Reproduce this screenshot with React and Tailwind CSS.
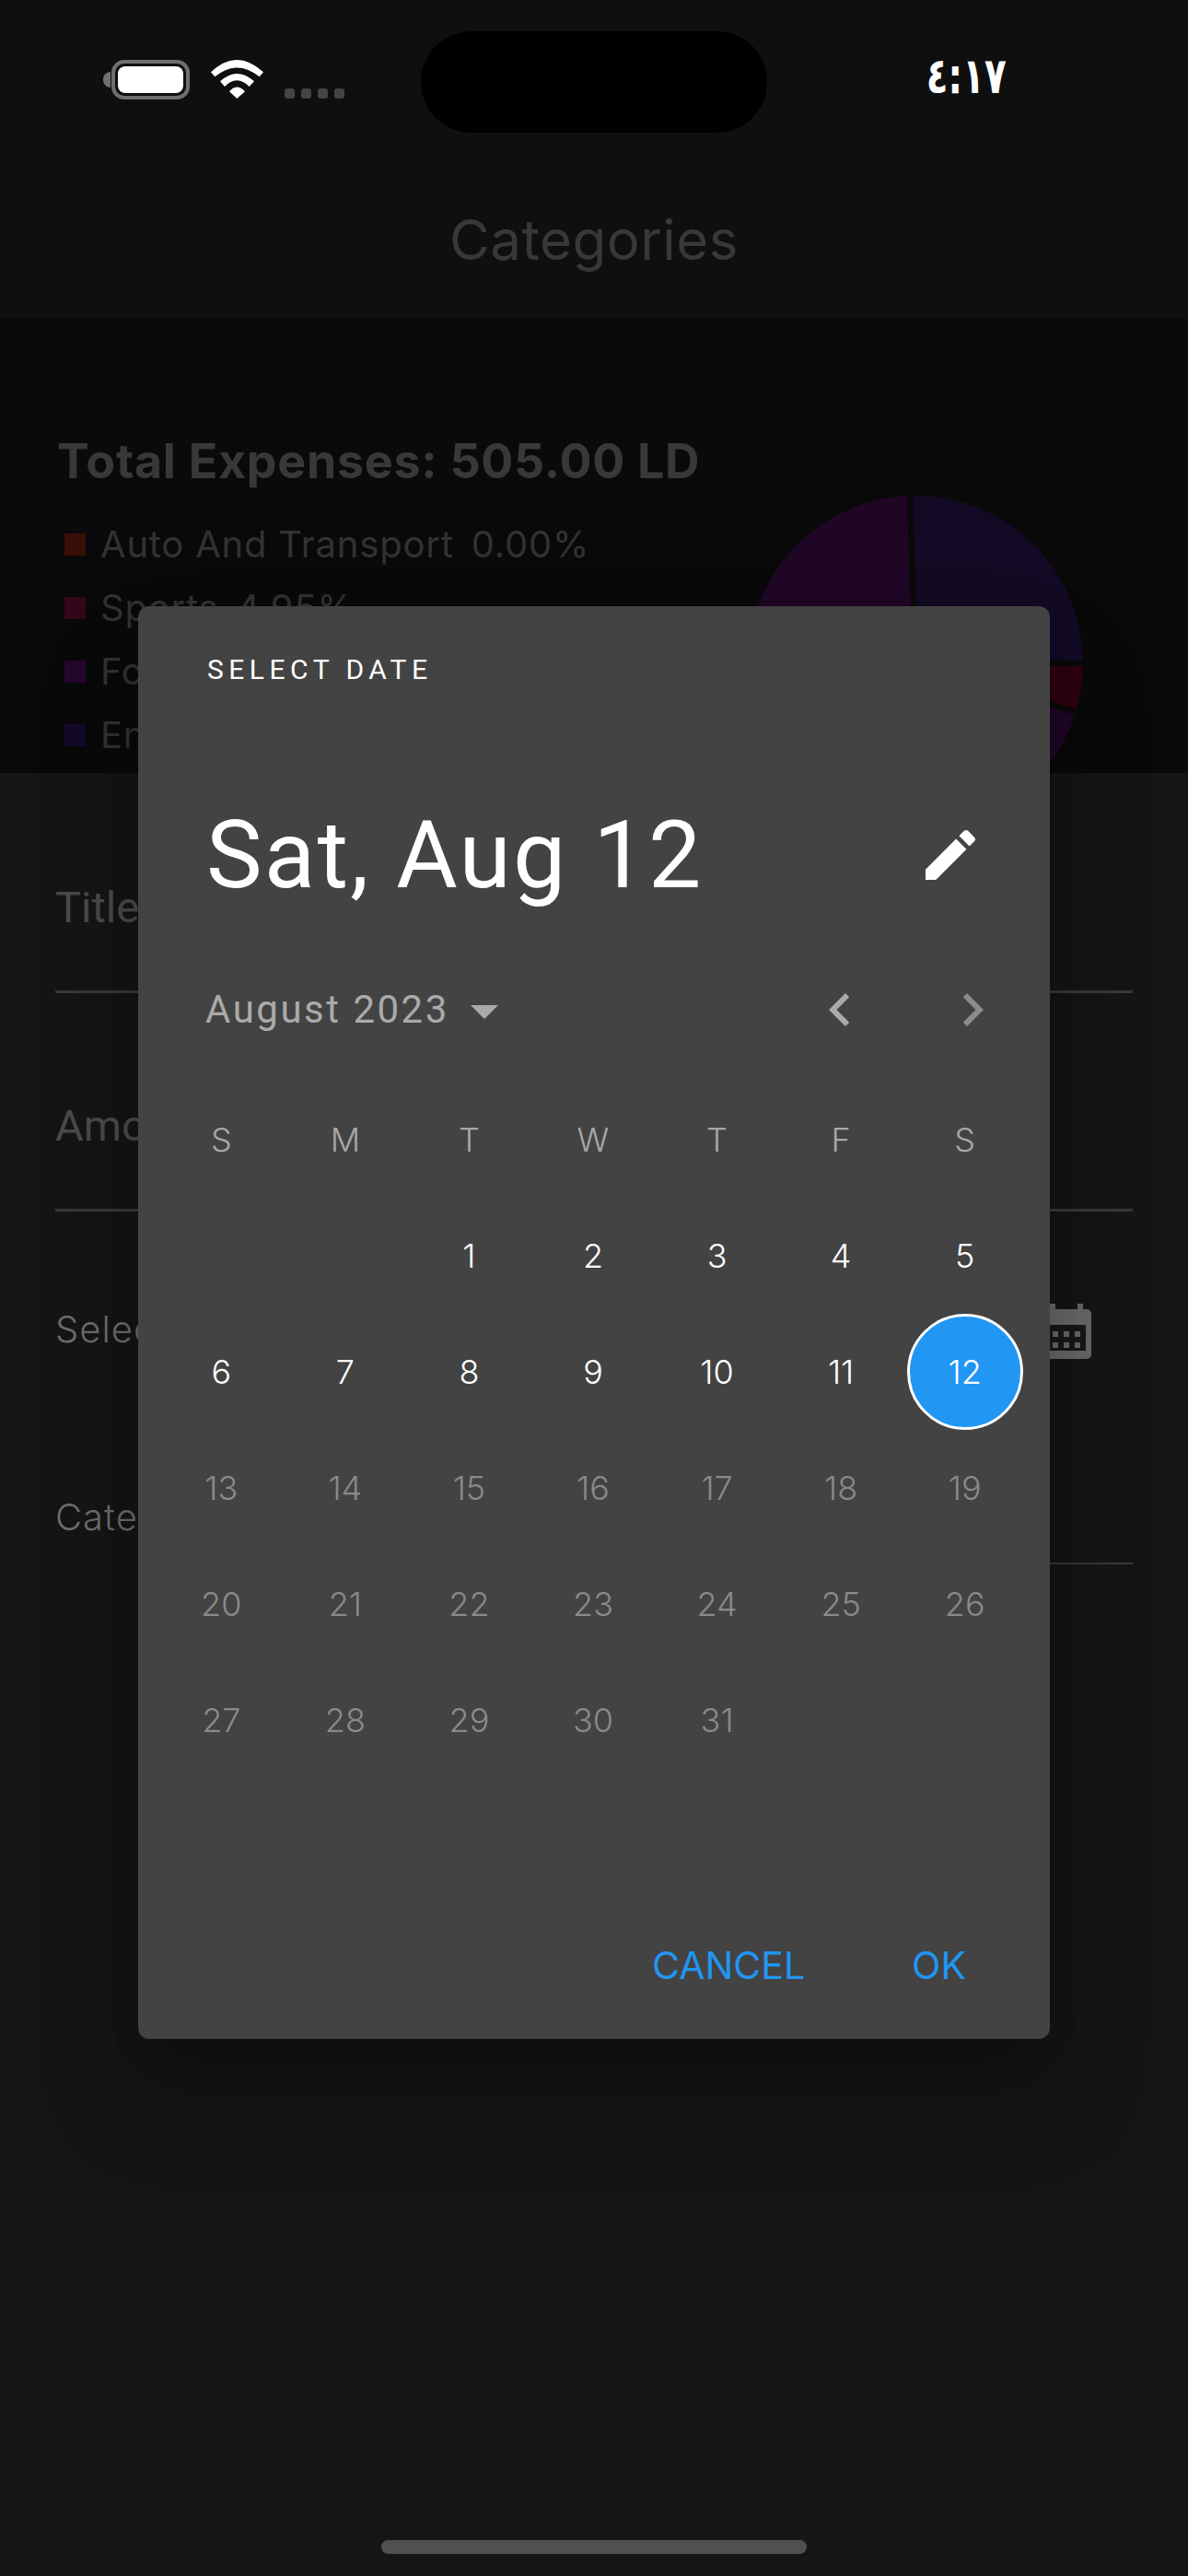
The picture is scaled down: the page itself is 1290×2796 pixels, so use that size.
import React from "react";

const C = 185;
const R = 185;
const polar = (deg) => {
  const a = ((deg - 90) * Math.PI) / 180;
  return [C + R * Math.cos(a), C + R * Math.sin(a)];
};
const slice = (from, to) => {
  const [x1, y1] = polar(from);
  const [x2, y2] = polar(to);
  const large = to - from > 180 ? 1 : 0;
  return `M${C} ${C} L${x1} ${y1} A${R} ${R} 0 ${large} 1 ${x2} ${y2} Z`;
};

function Pie() {
  return (
    <svg width="370" height="370" viewBox="0 0 370 370" className="shrink-0">
      <path d={slice(-2, 90)} fill="#140b26" stroke="#0a0a0a" strokeWidth="6" />
      <path d={slice(90, 107)} fill="#2e0410" stroke="#0a0a0a" strokeWidth="6" />
      <path d={slice(107, 358)} fill="#210726" stroke="#0a0a0a" strokeWidth="6" />
    </svg>
  );
}

function Wifi() {
  return (
    <svg width="57" height="42" viewBox="0 0 57 42" fill="#fff" className="shrink-0">
      <path d="M0 13.3Q28.3 -13.3 57 13.3L52.7 18.3Q28.3 -1.5 4.3 18.3Z" />
      <path d="M10 23.3Q28.3 6.5 47 23.3L41.7 29Q28.3 15.5 15 29Z" />
      <path d="M20 34.3Q28.3 24.5 37 34.3L28.3 42Z" />
    </svg>
  );
}

function Battery() {
  return (
    <div className="flex items-center h-[43px]">
      <div className="w-[8px] h-[17px] rounded-l-full bg-[#6f6f6f]" />
      <div className="ml-[1px] w-[85px] h-[43px] rounded-[14px] border-[4px] border-[#6f6f6f] p-[3px]">
        <div className="w-full h-full rounded-[8px] bg-white" />
      </div>
    </div>
  );
}

function CalendarIcon() {
  return (
    <svg width="54" height="60" viewBox="0 0 54 60" className="shrink-0 mr-[45px]">
      <path d="M9 0h6v6h24V0h6v6h4a5 5 0 0 1 5 5v44a5 5 0 0 1-5 5H5a5 5 0 0 1-5-5V11a5 5 0 0 1 5-5h4z" fill="#6b6b6b" />
      <rect x="6" y="23" width="42" height="28" fill="#191919" />
      {[12, 24, 36].map((x) =>
        [30, 42].map((y) => <rect key={`${x}-${y}`} x={x} y={y} width="6" height="6" fill="#6b6b6b" />)
      )}
    </svg>
  );
}

const legend = [
  ["#3a0f08", "Auto And Transport", "0.00%"],
  ["#36061a", "Sports", "4.95%"],
  ["#26082f", "Food", "70.30%"],
  ["#160a2c", "Entertainment", "24.75%"],
];

const weekdays = ["S", "M", "T", "W", "T", "F", "S"];
const days = [null, null, ...Array.from({ length: 31 }, (_, i) => i + 1)];

function Day({ d }) {
  if (d === null) return <div />;
  if (d === 12) {
    return (
      <div className="flex items-center justify-center">
        <div className="w-[126px] h-[126px] shrink-0 rounded-full bg-[#2196f3] border-[3px] border-white flex items-center justify-center text-white">
          {d}
        </div>
      </div>
    );
  }
  return (
    <div className={`flex items-center justify-center ${d < 12 ? "text-white" : "text-[#8a8a8a]"}`}>{d}</div>
  );
}

function Dialog() {
  return (
    <div className="absolute left-[150px] top-[658px] w-[990px] h-[1555px] rounded-xl bg-[#434343] flex flex-col shadow-[0_33px_45px_-21px_rgba(0,0,0,0.2),0_72px_114px_9px_rgba(0,0,0,0.14),0_27px_138px_24px_rgba(0,0,0,0.12)]">
      <div className="mt-[49px] ml-[75px] h-[40px] leading-[40px] text-[30px] tracking-[5.5px] text-white font-['Roboto',sans-serif]">
        SELECT DATE
      </div>
      <div className="mt-[121px] h-[120px] pl-[74px] pr-[72px] flex items-center justify-between">
        <div className="text-[102px] leading-[120px] tracking-[2.3px] text-white font-['Roboto',sans-serif]">Sat, Aug 12</div>
        <svg width="72" height="72" viewBox="0 0 24 24" fill="#fff">
          <path d="M3 17.25V21h3.75L17.81 9.94l-3.75-3.75L3 17.25zM20.71 7.04c.39-.39.39-1.02 0-1.41l-2.34-2.34c-.39-.39-1.02-.39-1.41 0l-1.83 1.83 3.75 3.75 1.83-1.83z" />
        </svg>
      </div>
      <div className="mt-[72px] h-[72px] pl-[73px] pr-[48px] flex items-center justify-between">
        <div className="flex items-center">
          <span className="text-[42px] leading-[72px] text-[#aaaaaa] tracking-[2.5px] font-['Roboto',sans-serif]">
            August 2023
          </span>
          <svg width="30" height="15" viewBox="0 0 30 15" className="ml-[23px] mt-[4px]">
            <path d="M0 0h30L15 15z" fill="#aaaaaa" />
          </svg>
        </div>
        <div className="flex items-center gap-[72px]">
          <svg width="72" height="72" viewBox="0 0 24 24" fill="#aaaaaa">
            <path d="M15.41 7.41L14 6l-6 6 6 6 1.41-1.41L10.83 12z" />
          </svg>
          <svg width="72" height="72" viewBox="0 0 24 24" fill="#8c8c8c">
            <path d="M10 6L8.59 7.41 13.17 12l-4.58 4.59L10 18l6-6z" />
          </svg>
        </div>
      </div>
      <div className="mt-[42px] ml-[23px] w-[942px] grid grid-cols-7 auto-rows-[126px] text-[36px] font-light font-['Inter',sans-serif]">
        {weekdays.map((w, i) => (
          <div key={i} className="flex items-center justify-center text-[#a8a8a8]">
            {w}
          </div>
        ))}
        {days.map((d, i) => (
          <Day key={i} d={d} />
        ))}
        <div />
        <div />
      </div>
      <div className="mt-[173px] pr-[91px] flex justify-end gap-[116px] text-[41px] leading-[60px] text-[#2196f3] font-['Inter',sans-serif]">
        <span>CANCEL</span>
        <span>OK</span>
      </div>
    </div>
  );
}

export default function App() {
  return (
    <div className="relative w-[1290px] h-[2796px] overflow-hidden flex flex-col bg-[#161616] font-['Inter',sans-serif]">
      <header className="h-[345px] shrink-0 bg-[#0f0f0f] flex flex-col">
        <div className="flex items-start pl-[112px] pt-[34px]">
          <div className="w-[345px] pt-[31px] flex items-end gap-[23px]">
            <Battery />
            <div className="flex items-end gap-[23px] mb-[1px]">
              <Wifi />
              <div className="flex gap-[7px]">
                {[0, 1, 2, 3].map((i) => (
                  <div key={i} className="w-[11px] h-[11px] rounded-[3px] bg-[#444444]" />
                ))}
              </div>
            </div>
          </div>
          <div className="w-[376px] h-[110px] rounded-[55px] bg-black" />
          <div
            dir="ltr"
            className="ml-[173px] mt-[19px] h-[60px] w-[86px] flex justify-center text-[54px] leading-[60px] font-bold text-white font-['DejaVu_Sans',sans-serif] whitespace-nowrap"
          >
            <span className="scale-x-[0.72]">٤:١٧</span>
          </div>
        </div>
        <div className="mt-[82px] h-[68px] leading-[68px] text-center text-[60px] tracking-[0.5px] text-[#383838]">Categories</div>
      </header>

      <section className="h-[494px] shrink-0 bg-[#0a0a0a] overflow-hidden flex">
        <div className="pt-[126px] pl-[62px]">
          <div className="h-[60px] leading-[60px] text-[52px] tracking-[0.7px] font-bold text-[#383838] whitespace-nowrap">
            Total Expenses: 505.00 LD
          </div>
          <div className="mt-[25px] flex flex-col">
            {legend.map(([c, name, pct]) => (
              <div key={name} className="h-[69px] flex items-center pl-[8px] text-[40px] tracking-[0.8px] text-[#333333] whitespace-nowrap">
                <div className="w-[23px] h-[24px] mr-[16px]" style={{ backgroundColor: c }} />
                <span>{name}</span>
                <span className="ml-[19px]">{pct}</span>
              </div>
            ))}
          </div>
        </div>
        <div className="ml-auto mr-[111px] mt-[190px]">
          <Pie />
        </div>
      </section>

      <section className="flex-1 px-[60px] pt-[116px] flex flex-col">
        <div className="pb-[60px] border-b-[3px] border-[#3a3a3a] h-[123px] text-[47px] leading-[60px] text-[#4d4d4d] font-['Roboto',sans-serif]">
          Title
        </div>
        <div className="mt-[114px] pb-[60px] border-b-[3px] border-[#3a3a3a] h-[123px] text-[47px] leading-[60px] text-[#4d4d4d] font-['Roboto',sans-serif]">
          Amount
        </div>
        <div className="mt-[98px] h-[60px] flex items-center justify-between text-[40px] tracking-[1px] font-light text-[#707070]">
          <span>Select Date</span>
          <div className="mt-[4px]">
            <CalendarIcon />
          </div>
        </div>
        <div className="mt-[144px] h-[81px] flex text-[40px] leading-[60px] tracking-[1px] font-light text-[#707070]">
          <span className="w-[400px]">Category</span>
          <div className="flex-1 border-b-2 border-[#3a3a3a]" />
        </div>
      </section>

      <Dialog />

      <div className="absolute left-[414px] top-[2757px] w-[462px] h-[15px] rounded-full bg-[#505050]" />
    </div>
  );
}
